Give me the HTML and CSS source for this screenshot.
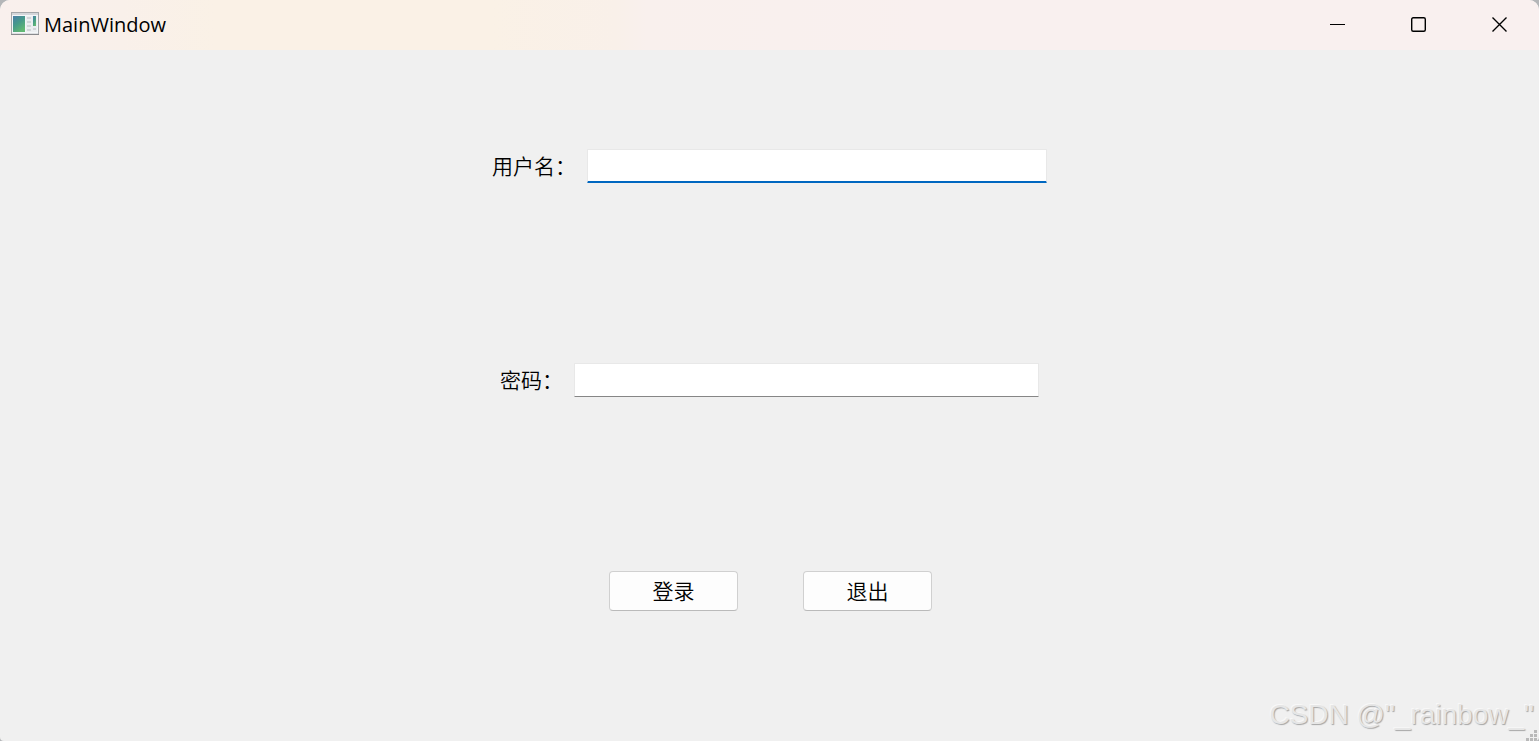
FILE: index.html
```html
<!DOCTYPE html>
<html lang="zh-CN">
<head>
<meta charset="utf-8">
<title>MainWindow</title>
<link rel="stylesheet" href="styles.css">
</head>
<body>
<div class="window">
  <header class="titlebar">
    <svg class="app-icon" width="28" height="24" viewBox="0 0 28 24" aria-hidden="true">
      <defs>
        <linearGradient id="pane" x1="0" y1="0" x2="0.600" y2="1">
          <stop offset="0" stop-color="#4a7da8"/>
          <stop offset=".5" stop-color="#46998a"/>
          <stop offset="1" stop-color="#62b873"/>
        </linearGradient>
        <linearGradient id="frame" x1="0" y1="0" x2="0" y2="1">
          <stop offset="0" stop-color="#d4d6da"/>
          <stop offset="1" stop-color="#dedfe1"/>
        </linearGradient>
      </defs>
      <rect x=".5" y=".5" width="27" height="22" fill="url(#frame)" stroke="#a4a6a9"/>
      <path d="M0 22.500h28" stroke="#88898c"/>
      <rect x="1" y="3" width="26" height="18" fill="#f4f6f8"/>
      <rect x="2" y="4" width="12" height="16" fill="url(#pane)"/>
      <rect x="15" y="4" width="11" height="16" fill="#eceef0"/>
      <path d="M16 6h4M16 10h4M16 14h4M16 18h4M22 17h3" stroke="#d2d5d8" stroke-width="2"/>
      <rect x="22" y="4" width="3" height="10" fill="url(#pane)"/>
    </svg>
    <h1 class="title">MainWindow</h1>
    <div class="controls">
      <button class="control" type="button" aria-label="Minimize">
        <svg width="16" height="16" viewBox="0 0 16 16"><path d="M1 7.500h15" stroke="#000"/></svg>
      </button>
      <button class="control" type="button" aria-label="Maximize">
        <svg width="16" height="16" viewBox="0 0 16 16"><rect x="1.700" y=".7" width="13.600" height="13.600" rx="1.500" fill="none" stroke="#000" stroke-width="1.400"/></svg>
      </button>
      <button class="control" type="button" aria-label="Close">
        <svg width="16" height="16" viewBox="0 0 16 16"><path d="M1.500.5l14 14M15.500.5l-14 14" fill="none" stroke="#000" stroke-width="1.400"/></svg>
      </button>
    </div>
  </header>
  <form class="login">
    <div class="row user-row">
      <label for="user">用户名：</label>
      <input class="field user-field" id="user" type="text">
    </div>
    <div class="row password-row">
      <label for="password">密码：</label>
      <input class="field password-field" id="password" type="password">
    </div>
    <div class="row actions">
      <button class="action" type="button">登录</button>
      <button class="action" type="button">退出</button>
    </div>
  </form>
  <div class="watermark">CSDN @"_rainbow_"</div>
  <svg class="grip" width="11" height="11" viewBox="0 0 11 11" aria-hidden="true">
    <path d="M8 0h3v3H8zM4 4h3v3H4zM8 4h3v3H8zM0 8h3v3H0zM4 8h3v3H4zM8 8h3v3H8z" fill="#b9b9b9"/>
  </svg>
</div>
</body>
</html>
```
FILE: styles.css
```css
* {
  box-sizing: border-box;
}

body {
  margin: 0;
  background: #b4b6b8;
  color: #000;
  font-family: "Noto Sans CJK SC", sans-serif;
  font-size: 21px;
  font-weight: 350;
}

.window {
  position: relative;
  display: flex;
  flex-direction: column;
  min-height: 100vh;
  overflow: hidden;
  border-radius: 10px 10px 4px 4px;
  background: #f0f0f0;
}

.titlebar {
  display: flex;
  align-items: center;
  height: 50px;
  padding-left: 11px;
  background: linear-gradient(90deg, #f9f0ed 0%, #f9f0ea 8%, #faf1e6 14%, #faf1e6 32%, #f9f0e9 40%, #f9f0ed 42%, #f9f0ef 60%);
}

.app-icon {
  margin-bottom: 2px;
}

.title {
  margin: 0 auto 0 5px;
  font: 400 20px/30px "Open Sans", sans-serif;
}

.controls {
  display: flex;
  align-self: stretch;
}

.control {
  display: grid;
  place-items: center;
  width: 81px;
  padding: 0;
  border: 0;
  background: none;
}

.login {
  flex: 1;
  display: grid;
  grid-template-rows: 99fr 34px 180fr 34px 174fr 40px 130fr;
  justify-items: center;
}

.row {
  display: flex;
  align-items: flex-start;
  gap: 11px;
  line-height: 32px;
}

.user-row {
  grid-row: 2;
}

.password-row {
  grid-row: 4;
}

.field {
  height: 34px;
  padding: 0 6px;
  border: 1px solid #e8e8e8;
  border-bottom-color: #868686;
  border-radius: 1px;
  outline: 0;
  background: #fff;
  font: inherit;
}

.user-field {
  width: 460px;
  border-bottom: 2px solid #0067c0;
}

.password-field {
  width: 465px;
}

.actions {
  grid-row: 6;
  gap: 65px;
  padding-left: 2px;
}

.action {
  width: 129px;
  height: 40px;
  padding: 0 0 2px;
  border: 1px solid #d0d0d0;
  border-bottom-color: #bababa;
  border-radius: 4px;
  background: #fdfdfd;
  color: #000;
  font: inherit;
}

.watermark {
  position: absolute;
  right: 5px;
  bottom: 9px;
  color: #e6e6e6;
  font: 400 28px/34px "Liberation Sans", sans-serif;
  text-shadow: 1px 1px 1px #a6a6a6, -1px -1px 0 #f8f8f8;
}

.grip {
  position: absolute;
  right: 2px;
  bottom: 0;
}
```
